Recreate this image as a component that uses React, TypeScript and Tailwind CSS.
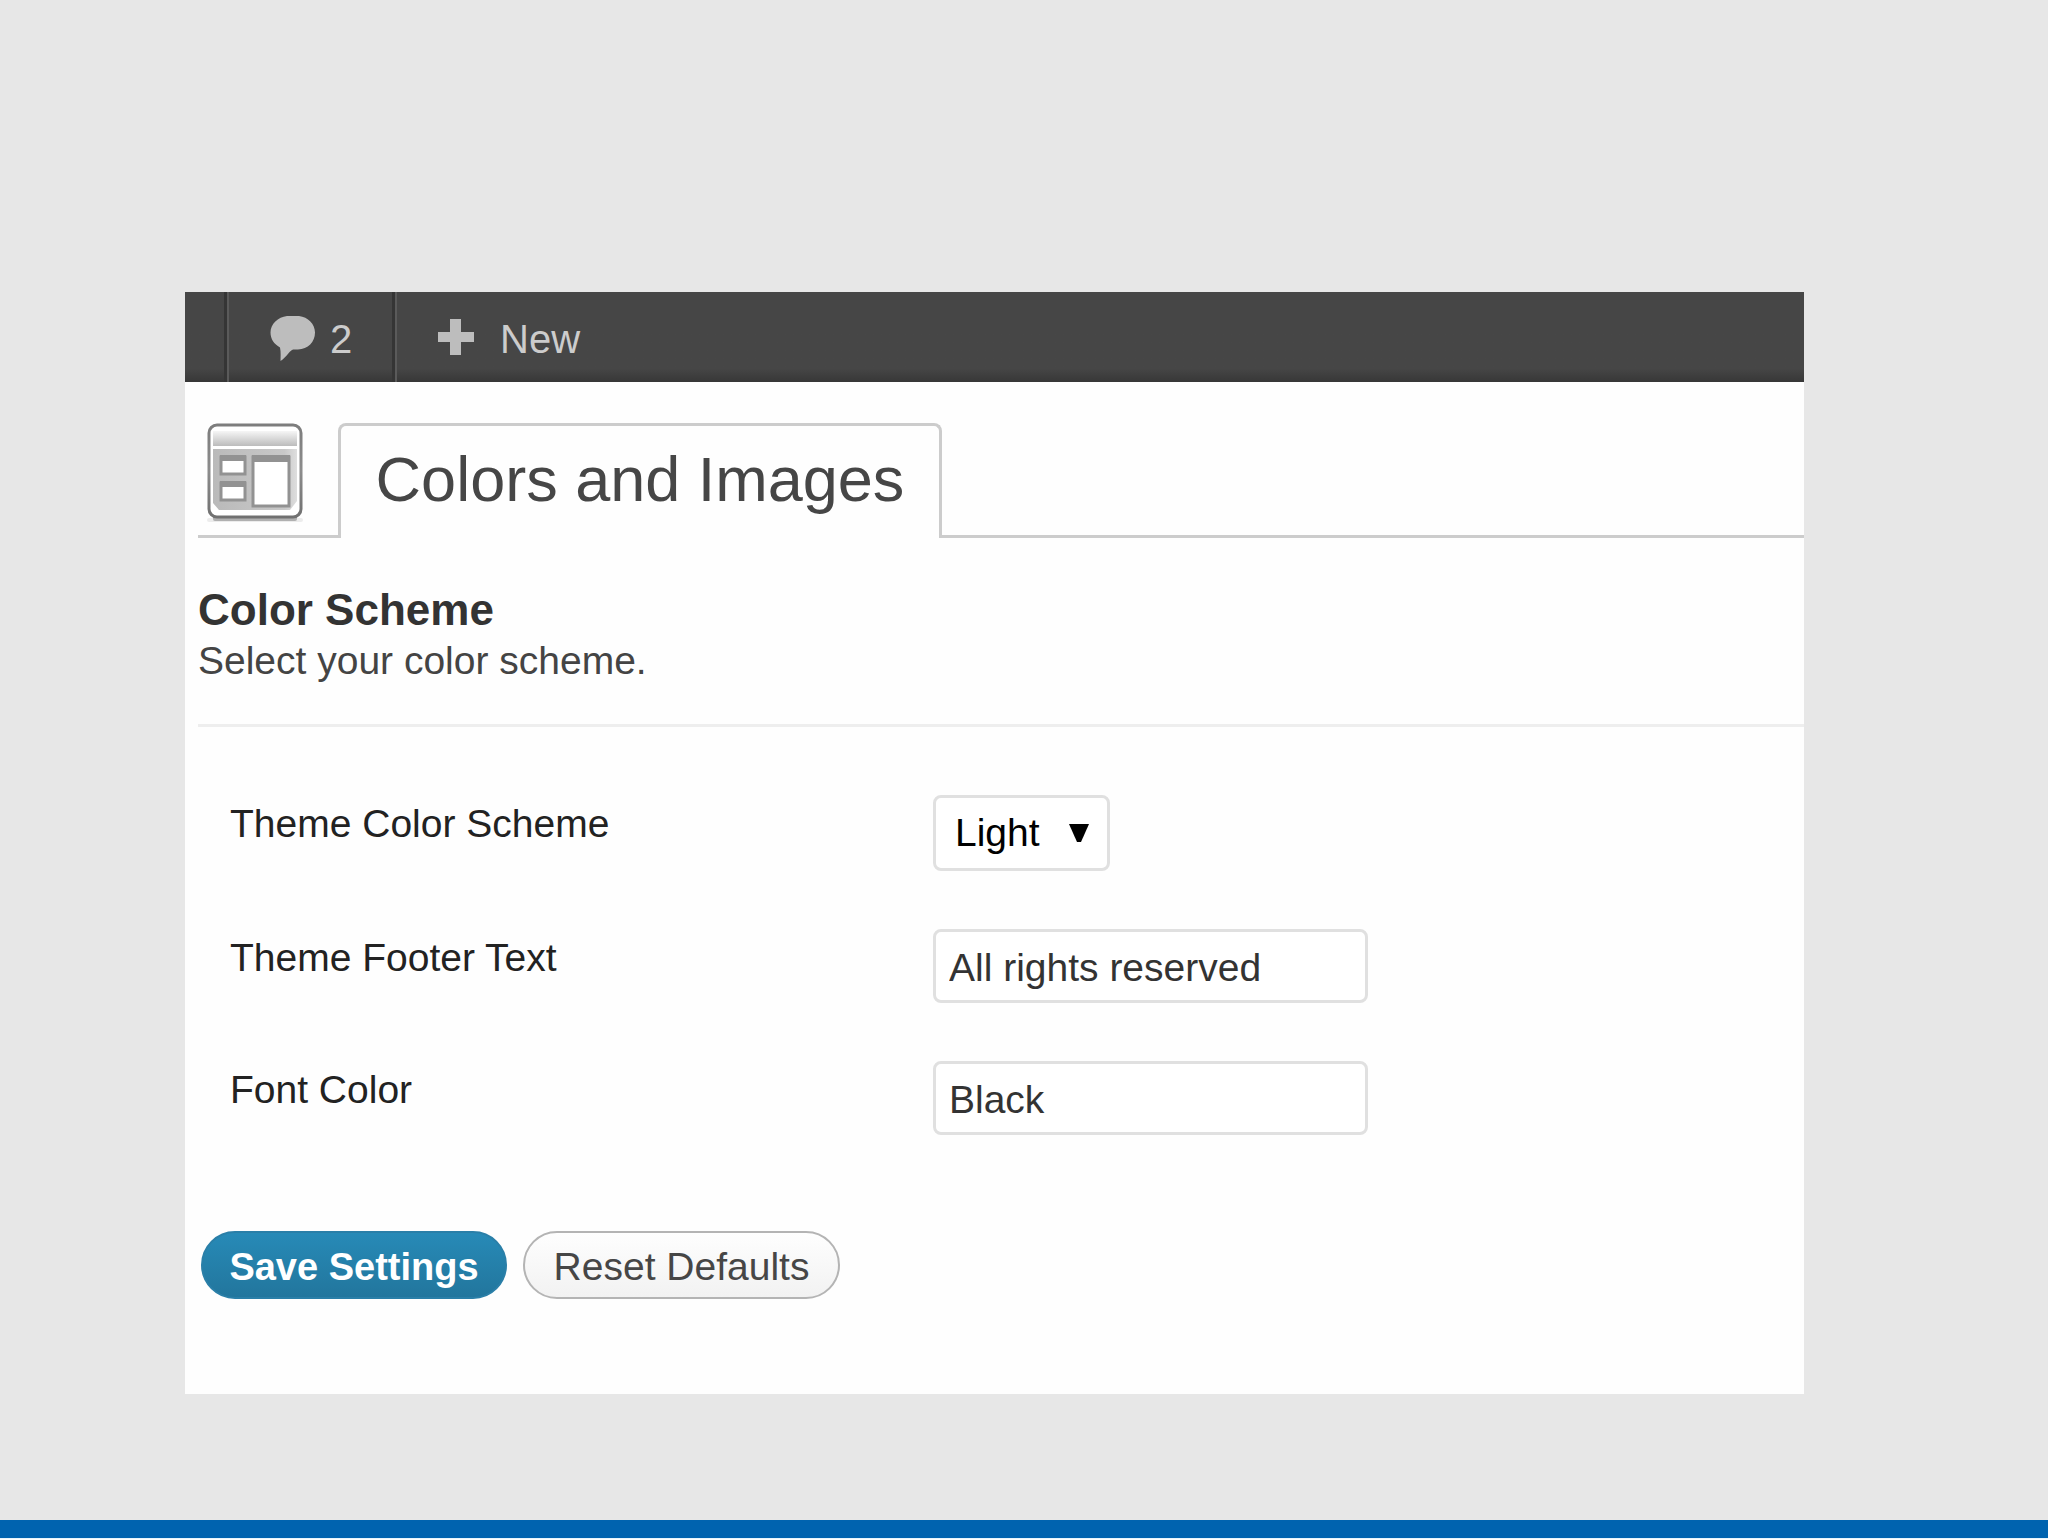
import type React from "react";
import { useState } from "react";

const DEFAULTS = {
  scheme: "Light",
  footerText: "All rights reserved",
  fontColor: "Black",
};

const CommentIcon = () => (
  <svg width="46" height="46" viewBox="0 0 46 46" aria-hidden="true">
    <path
      d="M17 0H29C38 1 45 8 45 16.500C45 26 38 33 28 33.500H23C18 36 17 41 10.500 45C10.500 41 11 36 10 31.500C4 28 0.500 23 0.500 16.500C0.500 8 8 1 17 0Z"
      fill="#bdbdbd"
    />
  </svg>
);

const PlusIcon = () => (
  <svg width="36" height="36" viewBox="0 0 36 36" aria-hidden="true">
    <path d="M12 0H23V13H36V23H23V36H12V23H0V13H12Z" fill="#bdbdbd" />
  </svg>
);

const ThemeIcon = () => (
  <svg width="102" height="102" viewBox="0 0 102 102" aria-hidden="true">
    <defs>
      <linearGradient id="header" x1="0" y1="0" x2="0" y2="1">
        <stop offset="0" stopColor="#f6f6f6" />
        <stop offset="1" stopColor="#bcbcbc" />
      </linearGradient>
      <linearGradient id="body" x1="0" y1="0" x2="1" y2="0">
        <stop offset="0" stopColor="#bababa" />
        <stop offset="0.850" stopColor="#c8c8c8" />
        <stop offset="1" stopColor="#dedede" />
      </linearGradient>
      <linearGradient id="frame" x1="0" y1="0" x2="0" y2="1">
        <stop offset="0" stopColor="#7d7d7d" />
        <stop offset="0.500" stopColor="#8c8c8c" />
        <stop offset="1" stopColor="#707070" />
      </linearGradient>
    </defs>
    <rect x="2" y="95" width="96" height="4" rx="2" fill="#ececec" />
    <rect x="8" y="93" width="84" height="5" rx="2" fill="#b0b0b0" />
    <rect x="4" y="2" width="92" height="92" rx="8" fill="#fff" stroke="url(#frame)" strokeWidth="3" />
    <rect x="8" y="8" width="84" height="15" fill="url(#header)" />
    <path d="M8 26H92V78L85 87H14L8 80Z" fill="url(#body)" />
    <rect x="16" y="34" width="24" height="17" fill="#fff" stroke="#929292" strokeWidth="3" />
    <rect x="15" y="32" width="26" height="6" fill="#929292" />
    <rect x="16" y="60" width="24" height="17" fill="#fff" stroke="#929292" strokeWidth="3" />
    <rect x="15" y="58" width="26" height="6" fill="#929292" />
    <rect x="48" y="34" width="36" height="49" fill="#fff" stroke="#929292" strokeWidth="3" />
    <rect x="47" y="32" width="38" height="7" fill="#929292" />
  </svg>
);

const AdminBar = () => (
  <nav className="flex h-[90px] bg-linear-to-b from-[#464646] from-85% to-[#373737] text-[40px] leading-[46px] text-[#cccccc]">
    <div className="w-[44px] border-r-2 border-[#5a5a5a] shadow-[inset_-3px_0_0_#353535]" />
    <a
      href="#comments"
      className="flex w-[168px] items-center gap-[14px] border-r-2 border-[#5a5a5a] pl-[41px] shadow-[inset_-3px_0_0_#353535]"
    >
      <span className="pt-1">
        <CommentIcon />
      </span>
      <span className="pt-1">2</span>
    </a>
    <a href="#new" className="flex items-center gap-[26px] pl-[41px]">
      <PlusIcon />
      <span className="pt-1">New</span>
    </a>
  </nav>
);

interface FieldRowProps {
  id: string;
  label: string;
  children: React.ReactNode;
}

const FieldRow: React.FC<FieldRowProps> = ({ id, label, children }) => {
  return (
    <div className="grid grid-cols-[703px_1fr] items-start">
      <label htmlFor={id} className="pt-[7px] text-[#222222]">
        {label}
      </label>
      <div className="flex">{children}</div>
    </div>
  );
};

const inputClass =
  "h-[74px] w-[435px] rounded-lg border-3 border-[#e0e0e0] bg-white px-[13px] pt-1 text-[#333333] outline-none";

export default function App() {
  const [settings, setSettings] = useState(DEFAULTS);

  return (
    <div className="flex min-h-screen flex-col bg-[#e7e7e7] font-['Liberation_Sans',Arial,sans-serif]">
      <main className="mt-[292px] mr-[244px] mb-[126px] ml-[185px] bg-[#fefefe] text-[39px] leading-[44px]">
        <AdminBar />

        <div className="pl-[13px]">
          <header className="flex pt-[41px]">
            <div className="w-[140px] border-b-3 border-[#cccccc] pl-[7px]">
              <ThemeIcon />
            </div>
            <h1 className="h-[115px] w-[604px] rounded-t-lg border-3 border-b-0 border-[#cccccc] pt-[16px] text-center text-[63px] leading-[74px] text-[#464646]">
              Colors and Images
            </h1>
            <div className="flex-1 border-b-3 border-[#cccccc]" />
          </header>

          <section className="border-b-3 border-[#eeeeee] pt-[47px] pb-[41px]">
            <h2 className="text-[44px] leading-[50px] font-bold text-[#333333]">
              Color Scheme
            </h2>
            <p className="pt-1 text-[#444444]">Select your color scheme.</p>
          </section>

          <form
            className="pt-[68px] pb-[95px]"
            onSubmit={(e) => e.preventDefault()}
          >
            <div className="flex flex-col gap-[58px] pl-[32px]">
              <FieldRow id="scheme" label="Theme Color Scheme">
                <div className="relative">
                  <select
                    id="scheme"
                    value={settings.scheme}
                    onChange={(e) =>
                      setSettings({ ...settings, scheme: e.target.value })
                    }
                    className="h-[76px] w-[177px] appearance-none rounded-lg border-3 border-[#e0e0e0] bg-white pl-[19px] text-black outline-none"
                  >
                    <option>Light</option>
                    <option>Dark</option>
                  </select>
                  <svg
                    width="20"
                    height="18"
                    viewBox="0 0 20 18"
                    className="pointer-events-none absolute top-[29px] right-[21px]"
                    aria-hidden="true"
                  >
                    <path d="M0 0H20L12 18H8Z" fill="#000" />
                  </svg>
                </div>
              </FieldRow>
              <FieldRow id="footer-text" label="Theme Footer Text">
                <input
                  id="footer-text"
                  type="text"
                  value={settings.footerText}
                  onChange={(e) =>
                    setSettings({ ...settings, footerText: e.target.value })
                  }
                  className={inputClass}
                />
              </FieldRow>
              <FieldRow id="font-color" label="Font Color">
                <input
                  id="font-color"
                  type="text"
                  value={settings.fontColor}
                  onChange={(e) =>
                    setSettings({ ...settings, fontColor: e.target.value })
                  }
                  className={inputClass}
                />
              </FieldRow>
            </div>

            <div className="flex gap-[16px] pt-[96px] pl-[3px]">
              <button
                type="submit"
                className="h-[68px] w-[306px] rounded-full border-2 border-[#2a7fa8] bg-linear-to-b from-[#278ab7] to-[#22769d] pt-1 text-[38px] font-bold text-white"
              >
                Save Settings
              </button>
              <button
                type="button"
                onClick={() => setSettings(DEFAULTS)}
                className="h-[68px] w-[317px] rounded-full border-2 border-[#b4b4b4] bg-linear-to-b from-[#fefefe] to-[#f2f2f2] pt-1 text-[#464646]"
              >
                Reset Defaults
              </button>
            </div>
          </form>
        </div>
      </main>
      <footer className="mt-auto h-[19px] border-b border-[#e8f4fb] bg-[#0063af]" />
    </div>
  );
}
